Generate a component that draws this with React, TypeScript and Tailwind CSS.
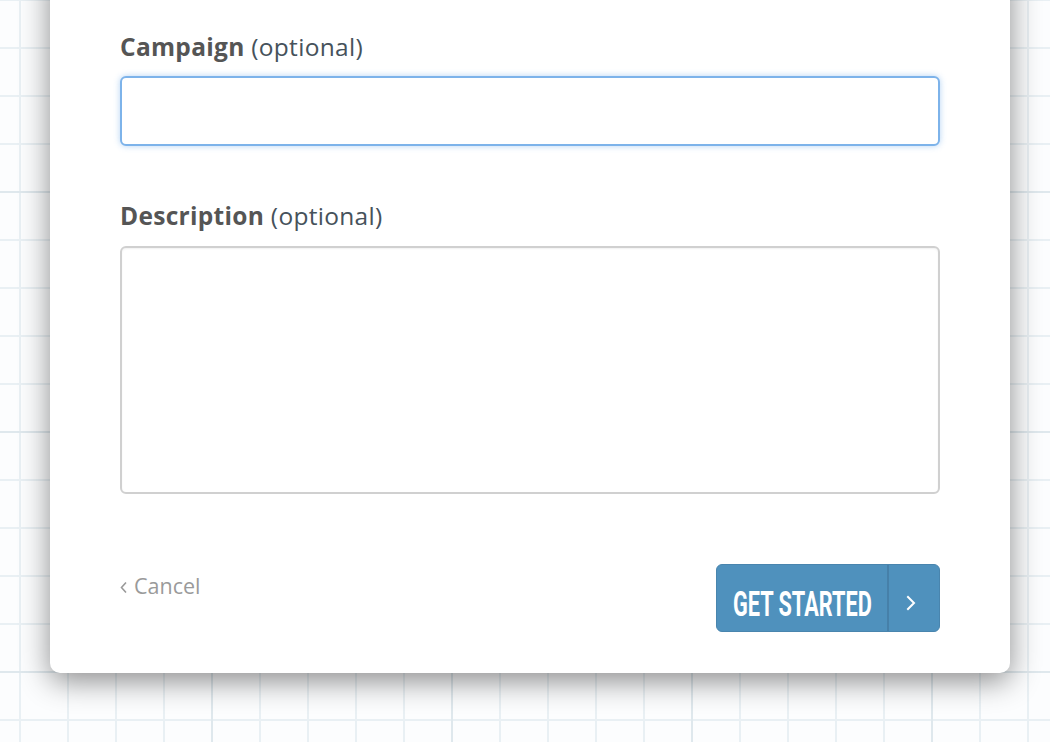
// App.tsx
const ChevronRight = ({ className }: { className?: string }) => (
  <svg viewBox="0 0 10 16" className={className} fill="none" stroke="currentColor" strokeWidth="2" strokeLinecap="square">
    <polyline points="2,2 8,8 2,14" />
  </svg>
);

const ChevronLeft = ({ className }: { className?: string }) => (
  <svg viewBox="0 0 8 12" className={className} fill="none" stroke="currentColor" strokeWidth="1.6">
    <polyline points="6,1 1.5,6 6,11" />
  </svg>
);

const Label = ({ name }: { name: string }) => (
  <label className="block h-[30px] whitespace-nowrap text-[24.5px] leading-[30px] tracking-[0.3px]">
    <span className="font-bold text-[#555555]">{name}</span>{" "}
    <span className="text-[#46525b]">(optional)</span>
  </label>
);

export default function App() {
  return (
    <div className="h-[742px] w-full overflow-hidden bg-[#fcfdfe] bg-[image:linear-gradient(to_right,#dfe8ed_2px,transparent_2px),linear-gradient(to_bottom,#dfe8ed_2px,transparent_2px),linear-gradient(to_right,#e9f0f4_2px,transparent_2px),linear-gradient(to_bottom,#e9f0f4_2px,transparent_2px)] bg-[size:240px_240px,240px_240px,48px_48px,48px_48px] bg-[position:211px_0,0_191px,19px_0,0_47px] font-['Open_Sans','Lato',sans-serif]">
      {/* card, top edge runs off the screen */}
      <div className="ml-[50px] -mt-[40px] w-[960px] rounded-[10px] bg-white px-[70px] pt-[72px] pb-[41px] shadow-[0_8px_30px_rgba(0,0,0,0.45)]">
        <Label name="Campaign" />
        <input
          type="text"
          className="mt-[14px] block h-[70px] w-full rounded-[6px] border-2 border-[#7db3ea] bg-white px-4 text-[22px] outline-none shadow-[0_0_6px_rgba(90,160,230,0.45)]"
        />

        <div className="mt-[55px]">
          <Label name="Description" />
        </div>
        <textarea className="mt-[15px] block h-[248px] w-full resize-none rounded-[6px] border-2 border-[#d0d0d0] bg-white px-4 py-3 text-[22px] outline-none shadow-[inset_0_1px_2px_rgba(0,0,0,0.06)]" />

        {/* footer */}
        <div className="mt-[70px] flex items-start justify-between">
          <a className="mt-[9px] flex items-center gap-[6px] text-[21.5px] leading-[26px] text-[#9a9a9a]">
            <ChevronLeft className="mt-[2px] h-[13px] w-[8px]" />
            Cancel
          </a>
          <button className="flex h-[68px] w-[224px] items-stretch rounded-[6px] border border-[#4985ae] bg-[#4f91bd] text-white">
            <span className="flex flex-1 items-center overflow-hidden pl-[16px] pt-[12px]">
              <span className="inline-block origin-left scale-x-[0.62] whitespace-nowrap font-['Roboto','Liberation_Sans',sans-serif] text-[35px] font-bold leading-none">
                GET STARTED
              </span>
            </span>
            <span className="flex w-[52px] shrink-0 items-center justify-center border-l-2 border-[#4680a9] pr-[6px] pt-[10px]">
              <ChevronRight className="h-[16px] w-[10px]" />
            </span>
          </button>
        </div>
      </div>
    </div>
  );
}
